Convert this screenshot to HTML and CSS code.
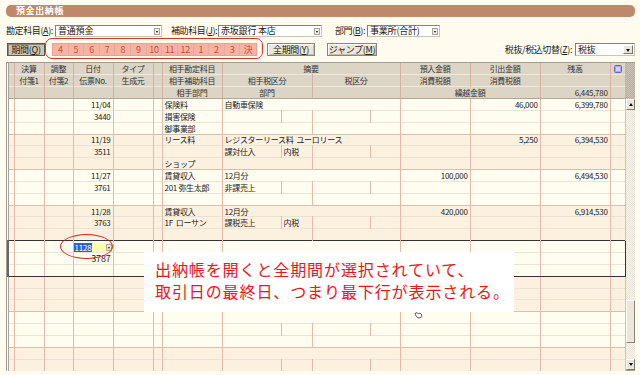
FILE: index.html
```html
<!DOCTYPE html>
<html lang="ja">
<head>
<meta charset="utf-8">
<title>預金出納帳</title>
<link rel="stylesheet" href="styles.css">
</head>
<body>
<div class="app">
  <div class="titlebar">預金出納帳</div>

  <div class="form-row">
    <span class="lbl w-kanjo">勘定科目(<u>A</u>):</span>
    <div class="sel s-kanjo"><span>普通預金</span><i class="dd"></i></div>
    <span class="lbl w-hojo">補助科目(<u>J</u>):</span>
    <div class="sel s-hojo"><span>赤坂銀行 本店</span><i class="dd"></i></div>
    <span class="lbl w-bumon">部門(<u>B</u>):</span>
    <div class="sel s-bumon"><span>事業所(合計)</span><i class="dd"></i></div>
  </div>

  <div class="period-row">
    <button class="btn pressed b-period">期間(<u>Q</u>)</button>
    <div class="months">
      <span>4</span><span>5</span><span>6</span><span>7</span><span>8</span><span>9</span><span>10</span><span>11</span><span>12</span><span>1</span><span>2</span><span>3</span><span>決</span>
    </div>
    <button class="btn b-all">全期間(<u>Y</u>)</button>
    <button class="btn b-jump">ジャンプ(<u>M</u>)</button>
    <span class="spacer"></span>
    <span class="lbl w-tax">税抜/税込切替(<u>Z</u>):</span>
    <div class="sel s-tax"><span>税抜</span><i class="dd big"></i></div>
  </div>

  <div class="grid-wrap">
    <table class="ledger">
      <colgroup>
        <col style="width:6px"><col style="width:30px"><col style="width:29px"><col style="width:40px"><col style="width:40px"><col style="width:9px"><col style="width:60px"><col style="width:59px"><col style="width:31px"><col style="width:58px"><col style="width:30px"><col style="width:70px"><col style="width:70px"><col style="width:70px"><col style="width:15px">
      </colgroup>
      <thead>
        <tr class="h1"><th></th><th>決算</th><th>調整</th><th>日付</th><th>タイプ</th><th></th><th>相手勘定科目</th><th colspan="4">摘要</th><th>預入金額</th><th>引出金額</th><th>残高</th><th class="ic"><svg width="8" height="8" viewBox="0 0 8 8"><rect x="0.5" y="0.5" width="7" height="7" rx="1" fill="#aaa4f0" stroke="#6a64c4"/><line x1="2" y1="3" x2="6" y2="3" stroke="#fff"/><line x1="2" y1="5" x2="6" y2="5" stroke="#fff"/></svg></th></tr>
        <tr class="h2"><th></th><th>付箋1</th><th>付箋2</th><th>伝票No.</th><th>生成元</th><th></th><th>相手補助科目</th><th colspan="2">相手税区分</th><th colspan="2">税区分</th><th>消費税額</th><th>消費税額</th><th></th><th></th></tr>
        <tr class="h3"><th></th><th></th><th></th><th></th><th></th><th></th><th>相手部門</th><th colspan="2">部門</th><th colspan="2"></th><th colspan="2">繰越金額</th><th class="num">6,445,780</th><th></th></tr>
      </thead>
      <tbody>
        <tr class="r1 a"><td></td><td></td><td></td><td class="num">11/04</td><td></td><td></td><td>保険料</td><td colspan="4">自動車保険</td><td class="num"></td><td class="num">46,000</td><td class="num">6,399,780</td><td></td></tr>
        <tr class="a"><td></td><td></td><td></td><td class="num">3440</td><td></td><td></td><td>損害保険</td><td></td><td></td><td></td><td></td><td></td><td></td><td></td><td></td></tr>
        <tr class="a"><td></td><td></td><td></td><td></td><td></td><td></td><td>御事業部</td><td colspan="2"></td><td colspan="2"></td><td></td><td></td><td></td><td></td></tr>

        <tr class="r1 b"><td></td><td></td><td></td><td class="num">11/19</td><td></td><td></td><td>リース料</td><td colspan="4">レジスターリース料&nbsp; ユーロリース</td><td class="num"></td><td class="num">5,250</td><td class="num">6,394,530</td><td></td></tr>
        <tr class="b"><td></td><td></td><td></td><td class="num">3511</td><td></td><td></td><td></td><td>課対仕入</td><td>内税</td><td></td><td></td><td></td><td></td><td></td><td></td></tr>
        <tr class="b"><td></td><td></td><td></td><td></td><td></td><td></td><td>ショップ</td><td colspan="2"></td><td colspan="2"></td><td></td><td></td><td></td><td></td></tr>

        <tr class="r1 a"><td></td><td></td><td></td><td class="num">11/27</td><td></td><td></td><td>賃貸収入</td><td colspan="4">12月分</td><td class="num">100,000</td><td class="num"></td><td class="num">6,494,530</td><td></td></tr>
        <tr class="a"><td></td><td></td><td></td><td class="num">3761</td><td></td><td></td><td>201 弥生太郎</td><td>非課売上</td><td></td><td></td><td></td><td></td><td></td><td></td><td></td></tr>
        <tr class="a"><td></td><td></td><td></td><td></td><td></td><td></td><td></td><td colspan="2"></td><td colspan="2"></td><td></td><td></td><td></td><td></td></tr>

        <tr class="r1 b"><td></td><td></td><td></td><td class="num">11/28</td><td></td><td></td><td>賃貸収入</td><td colspan="4">12月分</td><td class="num">420,000</td><td class="num"></td><td class="num">6,914,530</td><td></td></tr>
        <tr class="b"><td></td><td></td><td></td><td class="num">3763</td><td></td><td></td><td>1F&nbsp; ローサン</td><td>課税売上</td><td>内税</td><td></td><td></td><td></td><td></td><td></td><td></td></tr>
        <tr class="b"><td></td><td></td><td></td><td></td><td></td><td></td><td></td><td colspan="2"></td><td colspan="2"></td><td></td><td></td><td></td><td></td></tr>

        <tr class="r1 a sel s1"><td></td><td></td><td></td><td class="edit"><div class="date-input"><span class="hl">1128</span><i class="mini"></i></div></td><td></td><td></td><td></td><td colspan="4"></td><td></td><td></td><td></td><td></td></tr>
        <tr class="a sel"><td></td><td></td><td></td><td class="num">3787</td><td></td><td></td><td></td><td></td><td></td><td></td><td></td><td></td><td></td><td></td><td></td></tr>
        <tr class="a sel s3"><td></td><td></td><td></td><td></td><td></td><td></td><td></td><td colspan="2"></td><td colspan="2"></td><td></td><td></td><td></td><td></td></tr>

        <tr class="r1 b"><td></td><td></td><td></td><td></td><td></td><td></td><td></td><td colspan="4"></td><td></td><td></td><td></td><td></td></tr>
        <tr class="b"><td></td><td></td><td></td><td></td><td></td><td></td><td></td><td></td><td></td><td></td><td></td><td></td><td></td><td></td><td></td></tr>
        <tr class="b"><td></td><td></td><td></td><td></td><td></td><td></td><td></td><td colspan="2"></td><td colspan="2"></td><td></td><td></td><td></td><td></td></tr>

        <tr class="r1 a"><td></td><td></td><td></td><td></td><td></td><td></td><td></td><td colspan="4"></td><td></td><td></td><td></td><td></td></tr>
        <tr class="a"><td></td><td></td><td></td><td></td><td></td><td></td><td></td><td></td><td></td><td></td><td></td><td></td><td></td><td></td><td></td></tr>
        <tr class="a"><td></td><td></td><td></td><td></td><td></td><td></td><td></td><td colspan="2"></td><td colspan="2"></td><td></td><td></td><td></td><td></td></tr>

        <tr class="r1 b"><td></td><td></td><td></td><td></td><td></td><td></td><td></td><td colspan="4"></td><td></td><td></td><td></td><td></td></tr>
        <tr class="b"><td></td><td></td><td></td><td></td><td></td><td></td><td></td><td></td><td></td><td></td><td></td><td></td><td></td><td></td><td></td></tr>
      </tbody>
    </table>
    <div class="vscroll">
      <div class="vs-head"></div>
      <div class="vs-btn up"></div>
      <div class="vs-track"><div class="vs-thumb"></div></div>
      <div class="vs-btn down"></div>
    </div>
  </div>

  <span class="ellipse"></span>
  <div class="callout">出納帳を開くと全期間が選択されていて、<br>取引日の最終日、つまり最下行が表示される。</div>
  <svg class="cursor" width="9" height="8" viewBox="0 0 9 8"><path d="M1 2.5 L3 1.5 L4.5 3 L6 2 L8 4 L7 6.5 L4 7 L2 5 Z" fill="#fff" stroke="#333" stroke-width="0.8"/></svg>
</div>
</body>
</html>
```
FILE: styles.css
```css
* { box-sizing: border-box; }
html, body { margin: 0; padding: 0; }
body {
  width: 640px;
  height: 375px;
  overflow: hidden;
  background: #fffbee;
  font-family: "Noto Sans CJK JP", "Noto Sans", sans-serif;
  color: #222;
}
.app {
  position: relative;
  height: 375px;
  padding: 5px 5px 0 6px;
}

/* title */
.titlebar {
  height: 12px;
  background: #c0886a;
  border-radius: 5px;
  color: #fff;
  font-weight: bold;
  font-size: 9px;
  line-height: 12px;
  padding-left: 10px;
  letter-spacing: 0.6px;
}

/* form row */
.form-row {
  display: flex;
  align-items: center;
  height: 12px;
  margin-top: 8px;
}
.lbl {
  font-size: 9px;
  line-height: 12px;
  letter-spacing: -0.4px;
  white-space: nowrap;
  color: #222;
}
.lbl u { text-decoration: underline; }
.w-kanjo { width: 49px; }
.w-hojo { width: 47px; margin-left: 9px; }
.w-bumon { width: 32px; margin-left: 13px; }
.w-tax { margin-right: 3px; }

.sel {
  position: relative;
  height: 12px;
  background: #fff;
  border: 1px solid #85817a;
  border-right-color: #c8c4bc;
  border-bottom-color: #c8c4bc;
  font-size: 9px;
  line-height: 10px;
  padding-left: 2px;
  white-space: nowrap;
  letter-spacing: -0.2px;
}
.s-kanjo { width: 107px; }
.s-hojo { width: 104px; }
.s-bumon { width: 73px; }
.s-tax { width: 60px; height: 13px; line-height: 11px; }
.dd {
  position: absolute;
  right: 1px;
  top: 2px;
  width: 6px;
  height: 7px;
  background: #efebe3;
  border: 1px solid #a8a49c;
}
.dd::after {
  content: "";
  position: absolute;
  left: 1px;
  top: 2px;
  border-left: 1px solid transparent;
  border-right: 1px solid transparent;
  border-top: 2px solid #111;
}
.dd.big {
  top: 1px;
  right: 1px;
  width: 10px;
  height: 9px;
  background: #ece6d8;
  border-color: #fff #7a766e #7a766e #fff;
}
.dd.big::after {
  left: 2px;
  top: 3px;
  border-left: 2px solid transparent;
  border-right: 2px solid transparent;
  border-top: 3px solid #111;
}

/* period row */
.period-row {
  display: flex;
  align-items: center;
  height: 13px;
  margin-top: 6px;
  padding-left: 1px;
}
.btn {
  height: 13px;
  padding: 0;
  margin: 0;
  font-family: "Noto Sans CJK JP", "Noto Sans", sans-serif;
  font-size: 9px;
  line-height: 11px;
  letter-spacing: -0.3px;
  color: #222;
  background: #ece6d6;
  border: 1px solid #8a857a;
  box-shadow: inset 1px 1px #fff, inset -1px -1px #c4bcac;
  white-space: nowrap;
}
.btn.pressed {
  background: #cdc5b4;
  border-color: #5c5850;
  box-shadow: inset 1px 1px #8c8678;
}
.b-period { width: 38px; }
.b-all { width: 48px; margin-left: 10px; }
.b-jump { width: 50px; margin-left: 12px; }
.spacer { flex: 1; }

.months {
  position: relative;
  display: grid;
  grid-template-columns: repeat(13, 1fr);
  width: 205px;
  height: 13px;
  margin-left: 7px;
  background: #f6b3a3;
  border: 1px solid #e6a393;
}
.months span {
  font-size: 9px;
  line-height: 11px;
  text-align: center;
  color: #d04c38;
  border-right: 1px solid #eaa898;
  letter-spacing: -0.3px;
}
.months span:last-child { border-right: none; }
.months::before {
  content: "";
  position: absolute;
  left: -8px;
  right: -7px;
  top: -6px;
  bottom: -4px;
  border: 1px solid #e0302a;
  border-radius: 7px;
}

/* grid */
.grid-wrap {
  display: flex;
  margin-top: 6px;
  width: 629px;
  border-top: 1px solid #a29d94;
  border-left: 1px solid #a29d94;
}
.ledger {
  width: 617px;
  table-layout: fixed;
  border-collapse: collapse;
  font-size: 8px;
  letter-spacing: -0.3px;
  color: #222;
}
.ledger tr { height: 11.85px; }
.ledger th, .ledger td {
  padding: 0 2px;
  line-height: 9px;
  white-space: nowrap;
  overflow: hidden;
  border-left: 1px solid #e6b9a9;
  border-right: 1px solid #e6b9a9;
}
.ledger th {
  background: #dcd5c6;
  font-weight: normal;
  text-align: center;
  color: #333;
  border-top: 1px solid #efe9dd;
  border-left-color: #d6b0a0;
  border-right-color: #d6b0a0;
}
.ledger tr.h1 th { border-top: none; }
.ledger tr.h3 th { border-bottom: 1px solid #b2a896; }
.ledger th.num { text-align: right; }
.ledger th.ic { padding: 0; text-align: center; }
.ledger th.ic svg { display: block; margin: 1px auto 0; }

.ledger td {
  border-top: 1px solid #ebe3d3;
  text-align: left;
}
.ledger td.num { text-align: right; }
.ledger tr.r1 td { border-top: 1px solid #cdc3b0; }
.ledger tr.a td { background: #fffcf0; }
.ledger tr.b td { background: #fcf1df; }
.ledger th:first-child, .ledger td:first-child { border-left: 1px solid #aaa59c; }

.ledger tr.sel td:first-child { border-left: 2px solid #6a6660; }
.ledger tr.sel td:last-child { border-right: 1px solid #333; }
.ledger tr.s1 td { border-top: 1px solid #333; }
.ledger tr.s3 td { border-bottom: 1px solid #333; }

.ledger td.edit { padding: 0; }
.date-input {
  position: relative;
  height: 9px;
  margin: 1px 0 0 0;
  background: #ffffa6;
  font-size: 8px;
  line-height: 9px;
}
.date-input .hl {
  display: inline-block;
  background: #3163c6;
  color: #fff;
  padding: 0 1px;
  height: 9px;
}
.date-input .mini {
  position: absolute;
  right: 1px;
  top: 1px;
  width: 6px;
  height: 7px;
  background: #e8e4dc;
  border: 1px solid #b0aca4;
}
.date-input .mini::after {
  content: "";
  position: absolute;
  left: 1px;
  top: 2px;
  border-left: 1px solid transparent;
  border-right: 1px solid transparent;
  border-top: 2px solid #222;
}

/* scrollbar */
.vscroll {
  width: 11px;
  display: flex;
  flex-direction: column;
  border-bottom: 1px solid #a29d94;
}
.vs-head {
  height: 36px;
  background: repeating-conic-gradient(#c9c2b5 0 25%, #b8b0a3 0 50%) 0 0 / 2px 2px;
}
.vs-btn {
  position: relative;
  height: 11px;
  background: #ece6d8;
  border: 1px solid;
  border-color: #fff #7c776e #7c776e #fff;
}
.vs-btn::after {
  content: "";
  position: absolute;
  left: 2px;
  border-left: 2px solid transparent;
  border-right: 2px solid transparent;
}
.vs-btn.up::after { top: 3px; border-bottom: 3px solid #111; }
.vs-btn.down::after { top: 3px; border-top: 3px solid #111; }
.vs-track {
  flex: 1;
  background: repeating-conic-gradient(#f7f3ea 0 25%, #ebe6da 0 50%) 0 0 / 2px 2px;
}
.vs-thumb {
  margin-top: 190px;
  height: 43px;
  background: #ece7da;
  border: 1px solid;
  border-color: #fff #8a857b #8a857b #fff;
}

/* annotations */
.ellipse {
  position: absolute;
  left: 60px;
  top: 234px;
  width: 53px;
  height: 25px;
  border: 1px solid #e0201c;
  border-radius: 50%;
}
.callout {
  position: absolute;
  left: 144px;
  top: 252px;
  width: 370px;
  height: 60px;
  background: #fff;
  color: #f01414;
  font-size: 16px;
  line-height: 22px;
  letter-spacing: 0.9px;
  padding: 6px 0 0 11px;
  white-space: nowrap;
}
.cursor {
  position: absolute;
  left: 414px;
  top: 311px;
}
```
